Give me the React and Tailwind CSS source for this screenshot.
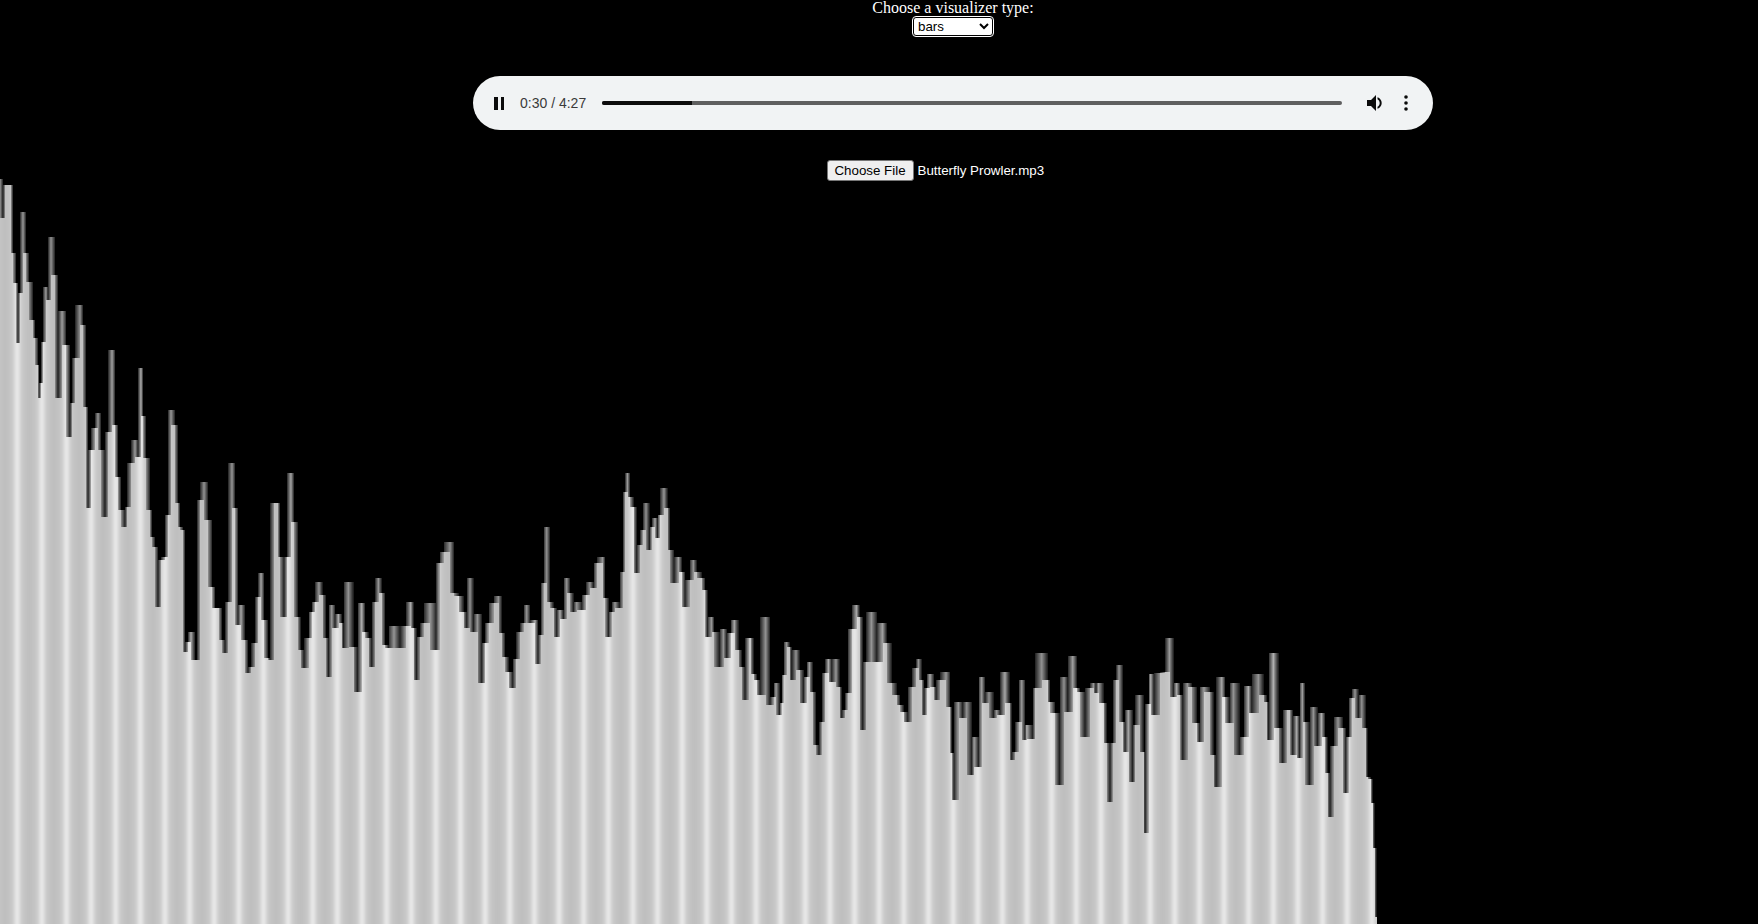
const P = [
  0,179, 3,218, 5,185, 8,185, 11,185, 13,253, 16,283, 18,343, 20,293, 23,212, 26,253, 29,282, 33,320, 35,338, 38,365, 39,398, 41,383, 43,342, 46,287, 48,300, 51,237, 55,275, 58,398, 62,311, 66,345, 70,437, 72,403, 75,358, 80,305, 83,325, 86,407, 88,508, 91,450, 95,428, 98,413, 101,450, 105,517, 108,432, 112,350, 115,425,
  118,477, 121,510, 125,527, 127,507, 131,463, 135,440, 138,457, 141,368, 143,416, 146,458, 150,510, 152,537, 155,547, 158,607, 161,560, 165,557, 168,515, 171,410, 175,425, 178,503, 180,527, 183,530, 185,652, 188,642, 191,632, 195,660, 197,660, 200,500, 204,482, 208,520, 212,587, 215,608, 219,608, 222,640, 225,653, 228,602, 232,463, 235,508, 238,625, 241,605, 245,640, 248,673, 251,667, 255,643, 258,597, 261,573, 264,620, 268,658, 270,660, 274,503, 278,503, 280,557, 284,617, 287,557, 291,473, 294,522, 298,617,
]

// zoomed-crop readings: [offsetX, offsetY, zx, zy, ...]
const CROPS = [
  [300, 460, [2,570, 12,625, 25,535, 35,455, 45,425, 57,365, 67,405, 78,535, 85,650, 95,435, 105,505, 115,462, 125,490, 130,565, 145,365, 160,560, 172,695, 185,430, 195,515, 205,535, 215,620, 225,425, 235,355, 245,400, 255,555, 265,565, 282,498, 300,565, 317,498, 332,427, 340,505, 349,660, 360,530, 370,490, 390,430, 408,570, 418,310, 430,275, 450,247, 462,400, 475,408, 490,455, 500,505, 510,355, 520,515, 532,462, 545,668, 555,550, 565,490, 580,428, 595,408, 605,520, 615,590, 625,635, 638,685, 648,598, 660,515, 670,490, 680,435, 690,490, 705,480, 714,612, 722,525, 730,370, 740,202, 750,425, 760,445, 770,530, 780,450, 790,478, 800,355, 810,400, 820,455, 830,425, 845,450, 858,405, 870,365, 880,385, 890,310, 908,292, 915,415, 925,530, 935,455, 945,427, 958,445, 968,335, 975,95, 982,40, 990,110, 1000,140, 1010,340, 1020,255, 1028,210, 1038,130, 1048,270, 1055,200, 1065,175, 1072,235, 1080,165, 1092,85, 1102,145, 1110,270, 1122,370, 1135,292, 1145,335, 1155,440, 1168,360, 1180,300, 1190,335, 1205,355, 1215,390, 1222,530, 1235,470, 1242,515, 1258,620, 1270,508, 1280,595, 1292,520, 1303,480, 1315,570, 1325,620, 1335,720, 1345,535]],
  [750, 580, [2,175, 10,282, 20,300, 30,345, 47,112, 60,375, 70,350, 78,310, 88,405, 95,370, 100,285, 110,185, 118,200, 125,300, 138,210, 148,270, 160,370, 170,290, 178,247, 188,335, 198,495, 207,525, 215,425, 225,280, 235,238, 245,305, 258,238, 268,320, 275,415, 285,390, 292,340, 305,147, 320,75, 328,110, 338,450, 348,245, 364,95, 380,245, 398,130, 410,190, 425,310, 440,345, 450,375, 460,395, 473,425, 485,320, 498,265, 505,238, 515,300, 522,405, 530,325, 540,283, 552,320, 558,360, 570,300, 588,275, 600,380, 605,520, 612,660, 625,365, 638,415, 650,365, 665,585, 672,470, 685,560, 695,292, 705,370, 717,337, 730,415, 740,390, 750,405, 765,275, 778,370, 785,540, 795,515, 805,425, 815,300, 825,480, 830,435, 848,478, 855,325, 875,220, 892,300, 900,365, 915,400, 928,615, 942,292, 953,395, 968,228, 980,325, 990,335, 1005,470, 1020,325, 1030,310, 1038,340, 1045,310, 1060,370, 1070,490, 1080,665, 1088,490, 1098,300, 1107,255, 1118,425, 1125,515, 1135,390, 1148,605, 1155,435, 1168,345, 1180,515, 1185,758, 1195,372, 1202,283, 1212,405, 1230,280, 1245,275, 1258,175, 1270,350, 1280,310, 1290,345, 1298,540, 1312,310, 1325,320, 1340,430, 1348,487, 1362,320, 1380,335, 1390,525, 1398,622, 1415,292, 1425,350, 1438,430, 1450,310, 1468,525, 1480,470, 1495,318]],
  [1250, 660, [5,158, 25,43, 40,105, 50,125, 55,240, 70,-20, 85,205, 98,310, 110,150, 120,150, 128,285, 140,168, 148,293, 157,70, 165,185, 178,375, 190,142, 202,258, 214,160, 225,230, 232,340, 240,472, 250,258, 264,170, 278,205, 287,400, 296,232, 305,115, 315,88, 325,175, 335,105, 347,205, 352,350, 362,357, 367,430, 373,565, 379,770]],
]

const bars = []
for (let i = 0; i < P.length; i += 2) bars.push([P[i], P[i + 1]])
for (const [ox, oy, pts] of CROPS) {
  for (let i = 0; i < pts.length; i += 2) bars.push([ox + pts[i] / 3, oy + pts[i + 1] / 3])
}

const TOP = 179
const END = 1377

function stripe(x) {
  const period = 24.63
  let d = ((x - 16.7) % period + period) % period
  if (d > period / 2) d -= period
  return 189 + 26 * Math.exp(-((d / 3.5) ** 2)) + 15 * Math.exp(-((d / 8.5) ** 2))
}

function dim(w) {
  return 0.16 + w * 0.6
}

function gray(v) {
  const c = Math.round(v)
  return `rgb(${c},${c},${c})`
}

function buildRects() {
  const rects = []
  let j = 0
  for (let x = 0; x < END; x++) {
    while (j < bars.length - 2 && bars[j + 1][0] <= x) j++
    const [xa, ya] = bars[j]
    const [xb, yb] = bars[j + 1]
    const t = Math.min(1, Math.max(0, (x + 0.5 - xa) / (xb - xa)))
    const top = Math.min(ya, yb)
    const low = Math.max(ya, yb)
    const w = ya < yb ? 1 - t : t
    const s = stripe(x)
    if (low > top) {
      rects.push(<rect key={`t${x}`} x={x} y={top - TOP} width="1" height={low - top} fill={gray(s * dim(w))} />)
    }
    rects.push(<rect key={`b${x}`} x={x} y={low - TOP} width="1" height={924 - low} fill={gray(s)} />)
  }
  return rects
}

function Visualizer() {
  return (
    <svg width="1758" height="745" viewBox="0 0 1758 745" shapeRendering="crispEdges" className="block self-start -mt-[2px] shrink-0">
      {buildRects()}
    </svg>
  )
}

function AudioPlayer() {
  return (
    <div className="mt-10 flex h-[54px] w-[960px] items-center rounded-[27px] bg-[#f1f3f4] font-['Liberation_Sans',sans-serif] text-[#1f1f1f]">
      <div className="ml-[21px] flex h-[13px] w-[10px] justify-between">
        <div className="w-[3.5px] bg-[#0b0b0b]" />
        <div className="w-[3.5px] bg-[#0b0b0b]" />
      </div>
      <span className="ml-[16px] w-[66px] whitespace-nowrap text-[14px] text-[#3a3a3a]">0:30 / 4:27</span>
      <div className="ml-[16px] h-[4px] w-[740px] overflow-hidden rounded-full bg-[#5f5f5f]">
        <div className="h-full w-[90px] bg-[#0c0c0c]" />
      </div>
      <svg className="ml-[22px]" width="24" height="24" viewBox="0 0 24 24" fill="#0b0b0b">
        <path d="M3 9v6h4l5 5V4L7 9H3z" />
        <path d="M13.500 6.200v2c1.300.7 2.200 2.200 2.200 3.800s-.9 3.100-2.200 3.800v2c2.400-.8 4.200-3.100 4.200-5.800s-1.800-5-4.200-5.800z" />
      </svg>
      <svg className="ml-[16px]" width="4" height="16" viewBox="0 0 4 16" fill="#0b0b0b">
        <circle cx="2" cy="2" r="1.800" />
        <circle cx="2" cy="8" r="1.800" />
        <circle cx="2" cy="14" r="1.800" />
      </svg>
    </div>
  )
}

export default function App() {
  return (
    <div className="h-screen w-full overflow-hidden bg-black">
      <div className="flex w-[1906px] flex-col items-center">
        <label className="font-['Liberation_Serif',serif] text-[16px] leading-[16px] text-white">Choose a visualizer type:</label>
        <select
          defaultValue="bars"
          className="mt-px h-[19px] w-[80px] rounded-[3px] border border-black bg-white font-['Liberation_Sans',sans-serif] text-[13.33px] text-black outline outline-1 outline-white"
        >
          <option value="bars">bars</option>
          <option value="wave">wave</option>
        </select>
        <AudioPlayer />
        <div className="mt-[30px] flex h-[21px] w-[253px] items-center font-['Liberation_Sans',sans-serif] text-[13.33px] text-white">
          <button className="h-[21px] w-[87px] rounded-[3px] border border-[#767676] bg-[#efefef] text-black">Choose File</button>
          <span className="ml-[4px] whitespace-nowrap">Butterfly Prowler.mp3</span>
        </div>
        <Visualizer />
      </div>
    </div>
  )
}
